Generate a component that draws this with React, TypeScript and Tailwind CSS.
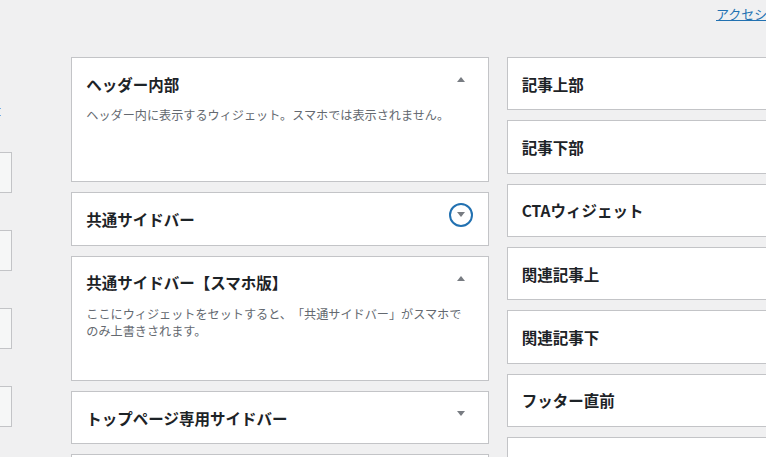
import React from "react";

type Area = {
  title: string;
  description?: string;
  open?: boolean;
  focused?: boolean;
};

const middleAreas: Area[] = [
  {
    title: "ヘッダー内部",
    description: "ヘッダー内に表示するウィジェット。スマホでは表示されません。",
    open: true,
  },
  { title: "共通サイドバー", focused: true },
  {
    title: "共通サイドバー【スマホ版】",
    description:
      "ここにウィジェットをセットすると、「共通サイドバー」がスマホでのみ上書きされます。",
    open: true,
  },
  { title: "トップページ専用サイドバー" },
  { title: "ヘッダー下" },
];

const rightAreas = [
  "記事上部",
  "記事下部",
  "CTAウィジェット",
  "関連記事上",
  "関連記事下",
  "フッター直前",
  "フッター左",
];

function Toggle({ open, focused }: { open?: boolean; focused?: boolean }) {
  return (
    <button
      aria-expanded={open}
      className={`mt-[9.67px] w-6 h-6 shrink-0 rounded-full border-2 flex items-center justify-center ${
        focused ? "border-[#2271b1]" : "border-transparent"
      }`}
    >
      {open ? (
        <span className="w-0 h-0 border-l-4 border-r-4 border-b-[5px] border-l-transparent border-r-transparent border-b-[#787c82]" />
      ) : (
        <span className="w-0 h-0 border-l-4 border-r-4 border-t-[5px] border-l-transparent border-r-transparent border-t-[#787c82]" />
      )}
    </button>
  );
}

function WidgetArea({ area }: { area: Area }) {
  return (
    <div
      className={`w-full shrink-0 bg-white border border-[#c3c4c7] ${
        area.open ? "h-[125.33px]" : "h-[53.33px]"
      }`}
    >
      <div className="flex items-start justify-between pl-[14px] pr-[15px]">
        <h2 className="mt-[14.67px] text-[15.5px] leading-[22px] font-bold text-[#1d2327] whitespace-nowrap">
          {area.title}
        </h2>
        <Toggle open={area.open} focused={area.focused} />
      </div>
      {area.description && (
        <p className="mt-[11.33px] pl-[14px] pr-[15px] text-[12.13px] leading-[17.7px] text-[#646970]">
          {area.description}
        </p>
      )}
    </div>
  );
}

export default function App() {
  return (
    <div
      lang="ja"
      className="w-[766px] h-[457px] overflow-hidden bg-[#f0f0f1] font-['Noto_Sans_CJK_JP','Noto_Sans',sans-serif] [text-spacing-trim:space-all]"
    >
      {/* top link */}
      <div className="h-[57px] pl-[716px] whitespace-nowrap">
        <a
          href="#"
          className="text-[13px] leading-[19px] text-[#2271b1] underline"
        >
          アクセシビリティモードを有効にする
        </a>
      </div>

      <div className="flex items-start">
        {/* available widgets (cut off) */}
        <div className="w-[12px] shrink-0 flex flex-col">
          <div className="mt-[51px] h-[8px] flex flex-col justify-between">
            <span className="block w-px h-px bg-[#72aee6]" />
            <span className="block w-px h-px bg-[#72aee6]" />
          </div>
          <div className="mt-[36px] flex flex-col gap-[37px]">
            {[0, 1, 2, 3].map((i) => (
              <div
                key={i}
                className="h-[41px] w-[12px] bg-[#f6f7f7] border-y border-r border-[#c3c4c7]"
              />
            ))}
          </div>
        </div>

        {/* middle column */}
        <div className="ml-[59.33px] w-[417.33px] shrink-0 flex flex-col gap-[10px]">
          {middleAreas.map((a) => (
            <WidgetArea key={a.title} area={a} />
          ))}
        </div>

        {/* right column */}
        <div className="ml-[18px] w-[417.33px] shrink-0 flex flex-col gap-[10px]">
          {rightAreas.map((t) => (
            <WidgetArea key={t} area={{ title: t }} />
          ))}
        </div>
      </div>
    </div>
  );
}
